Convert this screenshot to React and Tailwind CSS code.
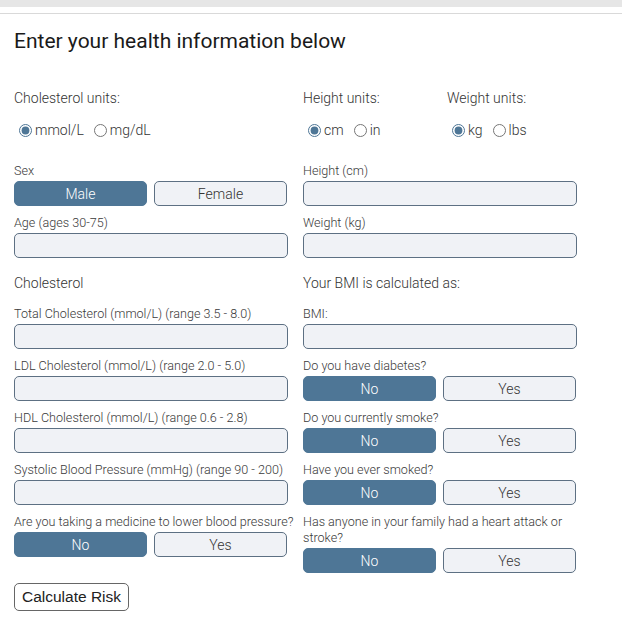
import React, { useState } from "react";

const font = { fontFamily: "Roboto, 'Noto Sans', sans-serif" };

const Label = ({ children, nowrap }) => (
  <div
    className={
      nowrap
        ? "text-[12.6px] leading-4 mb-[2px] text-[#3a3a3a] whitespace-nowrap"
        : "text-[12.6px] leading-4 mb-[2px] text-[#3a3a3a]"
    }
  >
    {children}
  </div>
);

const TextField = ({ label }) => (
  <div className="mb-[9px]">
    <Label>{label}</Label>
    <input
      type="text"
      className="block w-full h-[25px] rounded-[5px] border border-[#5d7083] bg-[#f0f2f6] px-2 text-sm outline-none"
    />
  </div>
);

const Toggle = ({ label, options, value, onChange, nowrap }) => (
  <div className="mb-[9px]">
    <Label nowrap={nowrap}>{label}</Label>
    <div className="grid grid-cols-2 gap-[7px] w-[273px]">
      {options.map((opt) =>
        opt === value ? (
          <button
            key={opt}
            onClick={() => onChange(opt)}
            className="h-[25px] rounded-[5px] border border-[#4e7696] bg-[#4e7696] text-sm text-white"
          >
            {opt}
          </button>
        ) : (
          <button
            key={opt}
            onClick={() => onChange(opt)}
            className="h-[25px] rounded-[5px] border border-[#5d7083] bg-[#f0f2f6] text-sm text-[#333]"
          >
            {opt}
          </button>
        )
      )}
    </div>
  </div>
);

const Radios = ({ name, options, value, onChange }) => (
  <div className="h-5 flex items-center text-sm text-[#333]">
    {options.map((opt) => (
      <label key={opt} className="flex items-center mr-[5px]">
        <input
          type="radio"
          name={name}
          checked={value === opt}
          onChange={() => onChange(opt)}
          className="w-[13px] h-[13px] ml-[5px] mr-[3px] accent-[#4e7696]"
        />
        {opt}
      </label>
    ))}
  </div>
);

const Heading = ({ children }) => (
  <div className="pt-[6px] pb-[13px] text-sm leading-5 text-[#333]">{children}</div>
);

export default function App() {
  const [chol, setChol] = useState("mmol/L");
  const [hUnit, setHUnit] = useState("cm");
  const [wUnit, setWUnit] = useState("kg");
  const [sex, setSex] = useState("Male");
  const [answers, setAnswers] = useState({
    bp: "No",
    diabetes: "No",
    smoke: "No",
    ever: "No",
    family: "No",
  });
  const set = (k) => (v) => setAnswers({ ...answers, [k]: v });

  return (
    <div className="w-[622px] h-[622px] bg-white font-light" style={font}>
      <div className="h-[7px] bg-[#e6e6e6]" />
      <div className="h-[6px]" />
      <div className="h-px bg-[#d9d9d9]" />
      <div className="px-[14px]">
        <h1 className="pt-[13px] text-[21px] leading-7 font-normal text-[#1a1a1a]">
          Enter your health information below
        </h1>

        <div className="grid grid-cols-[274px_274px] gap-x-[15px] mt-[33px]">
          {/* left column */}
          <div>
            <div className="text-sm leading-5 text-[#333]">Cholesterol units:</div>
            <div className="mt-3 mb-[23px]">
              <Radios
                name="chol"
                options={["mmol/L", "mg/dL"]}
                value={chol}
                onChange={setChol}
              />
            </div>
            <Toggle label="Sex" options={["Male", "Female"]} value={sex} onChange={setSex} />
            <TextField label="Age (ages 30-75)" />
            <Heading>Cholesterol</Heading>
            <TextField label="Total Cholesterol (mmol/L) (range 3.5 - 8.0)" />
            <TextField label="LDL Cholesterol (mmol/L) (range 2.0 - 5.0)" />
            <TextField label="HDL Cholesterol (mmol/L) (range 0.6 - 2.8)" />
            <TextField label="Systolic Blood Pressure (mmHg) (range 90 - 200)" />
            <Toggle
              label="Are you taking a medicine to lower blood pressure?"
              options={["No", "Yes"]}
              value={answers.bp}
              onChange={set("bp")}
              nowrap
            />
            <button
              className="mt-[17px] w-[115px] h-[28px] rounded-[5px] border border-[#666] bg-white text-[15.5px] font-normal text-[#222]"
              style={{ fontFamily: "'Liberation Sans', Arial, sans-serif" }}
            >
              Calculate Risk
            </button>
          </div>

          {/* right column */}
          <div>
            <div className="flex">
              <div className="w-[144px]">
                <div className="text-sm leading-5 text-[#333]">Height units:</div>
                <div className="mt-3 mb-[23px]">
                  <Radios name="h" options={["cm", "in"]} value={hUnit} onChange={setHUnit} />
                </div>
              </div>
              <div>
                <div className="text-sm leading-5 text-[#333]">Weight units:</div>
                <div className="mt-3 mb-[23px]">
                  <Radios name="w" options={["kg", "lbs"]} value={wUnit} onChange={setWUnit} />
                </div>
              </div>
            </div>
            <TextField label={`Height (${hUnit})`} />
            <TextField label={`Weight (${wUnit})`} />
            <Heading>Your BMI is calculated as:</Heading>
            <TextField label="BMI:" />
            <Toggle
              label="Do you have diabetes?"
              options={["No", "Yes"]}
              value={answers.diabetes}
              onChange={set("diabetes")}
            />
            <Toggle
              label="Do you currently smoke?"
              options={["No", "Yes"]}
              value={answers.smoke}
              onChange={set("smoke")}
            />
            <Toggle
              label="Have you ever smoked?"
              options={["No", "Yes"]}
              value={answers.ever}
              onChange={set("ever")}
            />
            <Toggle
              label="Has anyone in your family had a heart attack or stroke?"
              options={["No", "Yes"]}
              value={answers.family}
              onChange={set("family")}
            />
          </div>
        </div>
      </div>
    </div>
  );
}
